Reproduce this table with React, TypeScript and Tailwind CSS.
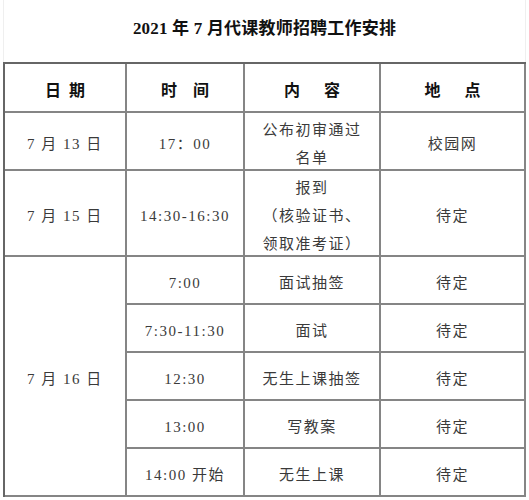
const body = "font-['Liberation_Serif','Noto_Sans_CJK_SC',serif]";

function Cell({
  children,
  className = "",
}: {
  children: React.ReactNode;
  className?: string;
}) {
  return (
    <div
      className={`flex flex-col items-center justify-center border-r-2 border-b-2 border-[#858585] pt-[5px] text-center text-[15px] leading-[28px] tracking-[1.5px] text-[#3a3a3a] ${className}`}
    >
      {children}
    </div>
  );
}

function Head({ children }: { children: React.ReactNode }) {
  return (
    <div className="flex items-center justify-center border-r-2 border-b-2 border-[#858585] pt-[6px] text-[16px] font-bold text-[#111] whitespace-pre">
      {children}
    </div>
  );
}

const day16 = [
  ["7:00", "面试抽签"],
  ["7:30-11:30", "面试"],
  ["12:30", "无生上课抽签"],
  ["13:00", "写教案"],
  ["14:00 开始", "无生上课"],
];

export default function App() {
  return (
    <div className={`w-[529px] h-[500px] bg-white ${body}`}>
      <div className="ml-[3px] w-[523px] h-[62px] border-x border-[#efefef] flex items-center justify-center pb-[4px]">
        <h1 className="text-[17px] font-bold tracking-[0.2px] text-[#111]">
          2021 年 7 月代课教师招聘工作安排
        </h1>
      </div>

      <div className="ml-[3px] w-fit border-l-2 border-t-2 border-[#666] grid grid-cols-[122px_118px_136px_145px] grid-rows-[49px_58px_86px_48px_48px_48px_48px_48px]">
        <Head>日  期</Head>
        <Head>时    间</Head>
        <Head>内      容</Head>
        <Head>地      点</Head>

        <Cell>7 月 13 日</Cell>
        <Cell>17：00</Cell>
        <Cell>
          <span>公布初审通过</span>
          <span>名单</span>
        </Cell>
        <Cell>校园网</Cell>

        <Cell>7 月 15 日</Cell>
        <Cell>14:30-16:30</Cell>
        <Cell className="leading-[28.5px]">
          <span>报到</span>
          <span>（核验证书、</span>
          <span>领取准考证）</span>
        </Cell>
        <Cell>待定</Cell>

        <Cell className="row-span-5">7 月 16 日</Cell>
        {day16.map(([time, what]) => (
          <div key={time} className="contents">
            <Cell>{time}</Cell>
            <Cell>{what}</Cell>
            <Cell>待定</Cell>
          </div>
        ))}
      </div>
    </div>
  );
}
